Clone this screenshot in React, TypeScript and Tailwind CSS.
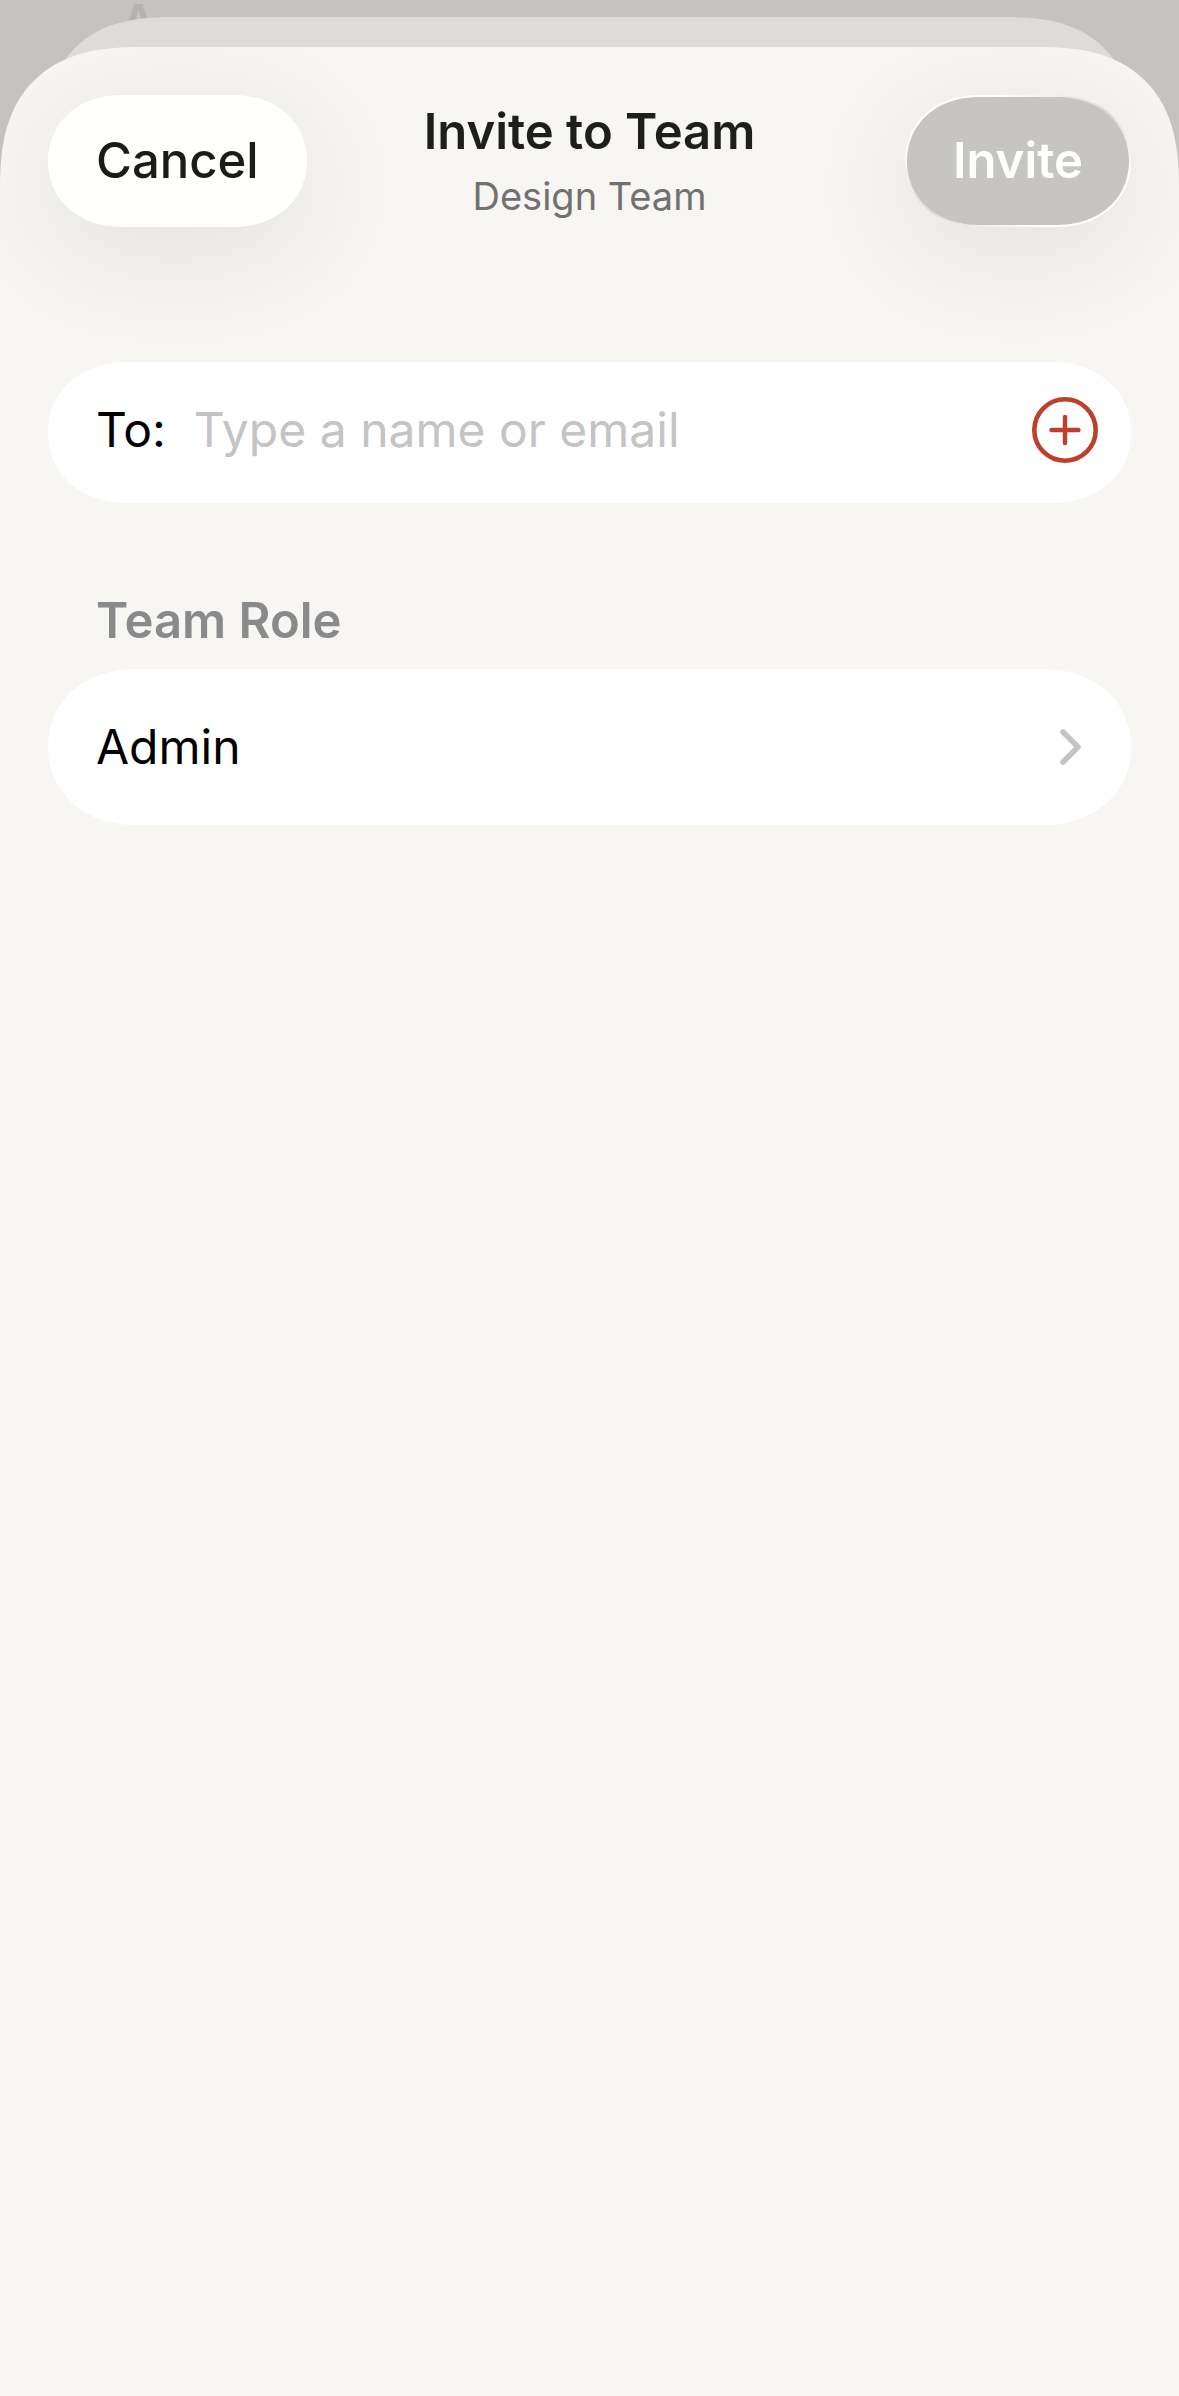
import React, { useState } from "react";

const PlusCircle = () => (
    <svg viewBox="0 0 66 66" className="w-[66px] h-[66px]" fill="none" stroke="#bf3f2d" aria-hidden="true">
        <circle cx="33" cy="33" r="30.7" strokeWidth="4.6" />
        <path d="M33 20v26M19.5 33h27" strokeWidth="4.4" strokeLinecap="round" />
    </svg>
);

const Chevron = () => (
    <svg viewBox="0 0 22 36" className="w-[22px] h-9" fill="none" stroke="#c4c4c5" aria-hidden="true">
        <path d="M3 3l15 15L3 33" strokeWidth="5.6" strokeLinecap="round" strokeLinejoin="round" />
    </svg>
);

export const App = () => {
    const [recipient, setRecipient] = useState("");
    const [role] = useState("Admin");

    return (
        <div className="relative min-h-screen overflow-hidden bg-[#c4c3c0] pt-[47px] font-['Inter',sans-serif] text-[48px] leading-[60px] text-black">
            {/* screens stacked behind the sheet */}
            <span aria-hidden="true" className="absolute left-[121px] top-1 font-semibold leading-9 text-[#b4b3b1]">
                A
            </span>
            <div className="absolute inset-x-11 top-[17px] h-60 rounded-t-[130px] bg-[#dddcda] [corner-shape:superellipse(1.35)]"></div>

            <main className="relative min-h-[calc(100vh-47px)] overflow-hidden rounded-t-[142px] bg-[#f7f6f3] px-12 pt-12 [corner-shape:superellipse(1.35)]">
                <header className="grid grid-cols-[1fr_auto_1fr] items-start text-[49px]">
                    <button
                        type="button"
                        className="h-33 justify-self-start rounded-[74px/66px] bg-[#fffffb] px-12 font-medium text-[#1c1b16] shadow-[0_24px_110px_rgba(0,0,0,0.09)] [corner-shape:superellipse(1.08)]"
                    >
                        Cancel
                    </button>
                    <div className="pt-[5px] text-center">
                        <h1 className="font-semibold leading-16 text-[#1e1e1c]">Invite to Team</h1>
                        <p className="text-[38px] leading-16 text-[#71716f]">Design Team</p>
                    </div>
                    <button
                        type="button"
                        disabled={!recipient}
                        className="h-33 justify-self-end rounded-[74px/66px] border-2 border-transparent px-[46px] font-semibold text-[#fffffb] shadow-[0_24px_110px_rgba(0,0,0,0.09)] [corner-shape:superellipse(1.08)] [background:linear-gradient(#c6c5c1,#c6c5c1)_padding-box,linear-gradient(150deg,#ffffff_20%,#dcdbd8_50%,#ffffff_80%)_border-box]"
                    >
                        Invite
                    </button>
                </header>

                <div className="mt-[134px] flex h-[141px] items-center rounded-[80px/70px] bg-white pb-1.5 pl-12 pr-[33px] [corner-shape:superellipse(1.08)]">
                    <label htmlFor="recipient">To:</label>
                    <input
                        id="recipient"
                        type="text"
                        value={recipient}
                        onChange={(e) => setRecipient(e.target.value)}
                        placeholder="Type a name or email"
                        className="ml-7 min-w-0 flex-1 bg-transparent outline-none placeholder:text-[#c4c4c4]"
                    />
                    <button type="button" aria-label="Add from contacts">
                        <PlusCircle />
                    </button>
                </div>

                <section className="mt-22">
                    <h2 className="pl-12 text-[49px] font-semibold leading-[60px] text-[#8a8a8c]">Team Role</h2>
                    <button
                        type="button"
                        className="mt-[18px] flex h-39 w-full items-center justify-between rounded-[88px/78px] bg-white pl-12 pr-[49px] [corner-shape:superellipse(1.08)]"
                    >
                        {role}
                        <Chevron />
                    </button>
                </section>
            </main>
        </div>
    );
};

export default App;
